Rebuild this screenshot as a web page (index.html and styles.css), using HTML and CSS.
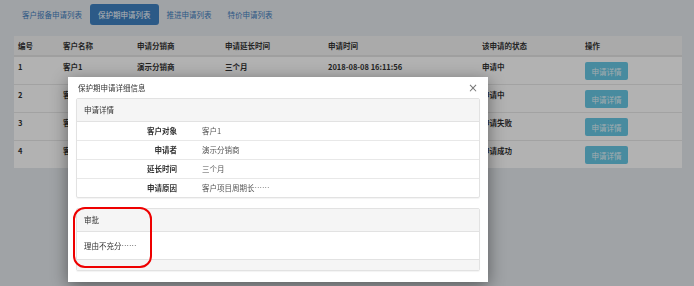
FILE: index.html
```html
<!DOCTYPE html>
<html lang="zh-CN">
<head>
  <meta charset="UTF-8">
  <title>保护期申请列表</title>
  <link rel="stylesheet" href="styles.css">
</head>
<body>

  <div class="page">
    <ul class="tabs">
      <li><a href="#">客户报备申请列表</a></li>
      <li class="active"><a href="#">保护期申请列表</a></li>
      <li><a href="#">推进申请列表</a></li>
      <li><a href="#">特价申请列表</a></li>
    </ul>

    <table class="list">
      <colgroup>
        <col style="width:45px">
        <col style="width:74px">
        <col style="width:88px">
        <col style="width:103px">
        <col style="width:154px">
        <col style="width:103px">
        <col>
      </colgroup>
      <thead>
        <tr>
          <th>编号</th>
          <th>客户名称</th>
          <th>申请分销商</th>
          <th>申请延长时间</th>
          <th>申请时间</th>
          <th>该申请的状态</th>
          <th>操作</th>
        </tr>
      </thead>
      <tbody>
        <tr>
          <td>1</td><td>客户1</td><td>演示分销商</td><td>三个月</td>
          <td>2018-08-08 16:11:56</td><td>申请中</td>
          <td><button class="btn-info">申请详情</button></td>
        </tr>
        <!-- rows below sit under the dialog; their middle cells are hidden by it -->
        <tr>
          <td>2</td><td>客户2</td><td></td><td></td><td></td><td>申请中</td>
          <td><button class="btn-info">申请详情</button></td>
        </tr>
        <tr>
          <td>3</td><td>客户3</td><td></td><td></td><td></td><td>申请失败</td>
          <td><button class="btn-info">申请详情</button></td>
        </tr>
        <tr>
          <td>4</td><td>客户4</td><td></td><td></td><td></td><td>申请成功</td>
          <td><button class="btn-info">申请详情</button></td>
        </tr>
      </tbody>
    </table>
  </div>

  <div class="backdrop"></div>

  <div class="modal">
    <div class="modal-header">
      <span class="modal-title">保护期申请详细信息</span>
      <span class="close">&times;</span>
    </div>
    <div class="modal-body">
      <div class="panel">
        <div class="panel-heading">申请详情</div>
        <div class="detail-row"><span class="label">客户对象</span><span class="value">客户1</span></div>
        <div class="detail-row"><span class="label">申请者</span><span class="value">演示分销商</span></div>
        <div class="detail-row"><span class="label">延长时间</span><span class="value">三个月</span></div>
        <div class="detail-row"><span class="label">申请原因</span><span class="value">客户项目周期长……</span></div>
      </div>

      <div class="panel approve">
        <div class="panel-heading">审批</div>
        <div class="panel-body">理由不充分……</div>
        <div class="panel-footer"></div>
      </div>
    </div>
    <!-- red annotation round the approval box -->
    <div class="mark"></div>
  </div>

</body>
</html>
```

FILE: styles.css
```css
body {
  margin: 0;
  font-family: "Noto Sans CJK SC", "Noto Sans", sans-serif;
  font-size: 7.5px;
  color: #333;
  background: #e6eaee;
  width: 694px;
  height: 286px;
  overflow: hidden;
}

.page {
  padding: 4px 12px 0 14px;
}

.tabs {
  list-style: none;
  margin: 0;
  padding: 0;
  display: flex;
  height: 21px;
}

.tabs a {
  display: block;
  height: 21px;
  line-height: 21px;
  padding: 0 8px;
  color: #3f7fbf;
  text-decoration: none;
  border-radius: 3px;
}

.tabs .active a {
  background: #3f82c2;
  color: #fff;
}

.list {
  margin-top: 11px;
  width: 668px;
  border-collapse: collapse;
  table-layout: fixed;
  background: #fff;
  font-weight: bold;
}

.list th {
  text-align: left;
  background: #f4f4f4;
  height: 19px;
  padding: 0 4px;
  line-height: 11px;
  border-bottom: 2px solid #e4e4e4;
}

.list td {
  vertical-align: top;
  padding: 4px 4px;
  line-height: 11px;
  height: 18px;
  border-bottom: 1px solid #e8e8e8;
}

.list tbody tr:last-child td {
  border-bottom: none;
}

.btn-info {
  display: block;
  margin-top: 1px;
  width: 43px;
  height: 18px;
  padding: 0;
  border: none;
  border-radius: 2px;
  background: #68c8e4;
  color: #e8f6fb;
  font-family: inherit;
  font-size: 7.5px;
  font-weight: normal;
}

.backdrop {
  position: fixed;
  inset: 0;
  background: rgba(0, 0, 0, 0.3);
}

.modal {
  position: absolute;
  left: 68px;
  top: 77px;
  width: 420px;
  height: 205px;
  background: #fff;
  box-shadow: 0 4px 16px rgba(0, 0, 0, 0.45);
}

.modal-header {
  height: 21px;
  padding: 0 10px;
  display: flex;
  align-items: center;
  justify-content: space-between;
}

.close {
  font-family: "DejaVu Sans", sans-serif;
  font-size: 12px;
  color: #777;
}

.modal-body {
  padding: 0 8px;
}

.panel {
  border: 1px solid #e2e2e2;
  border-radius: 2px;
  box-shadow: 0 1px 1px rgba(0, 0, 0, 0.05);
}

.panel-heading {
  height: 22px;
  line-height: 22px;
  padding: 0 7px;
  background: #f5f5f5;
  border-bottom: 1px solid #e2e2e2;
}

.detail-row {
  display: flex;
  height: 18px;
  line-height: 18px;
  border-bottom: 1px solid #e8e8e8;
}

.detail-row:last-child {
  border-bottom: none;
}

.label {
  width: 100px;
  text-align: right;
  font-weight: bold;
}

.value {
  margin-left: 25px;
  color: #555;
}

.approve {
  margin-top: 10px;
}

.panel-body {
  height: 27px;
  line-height: 27px;
  padding: 0 7px;
  border-bottom: 1px solid #e2e2e2;
}

.panel-footer {
  height: 10px;
  background: #f5f5f5;
}

.mark {
  position: absolute;
  left: 5px;
  top: 130px;
  width: 75px;
  height: 57px;
  border: 2px solid #ee0000;
  border-radius: 12px;
}
```
